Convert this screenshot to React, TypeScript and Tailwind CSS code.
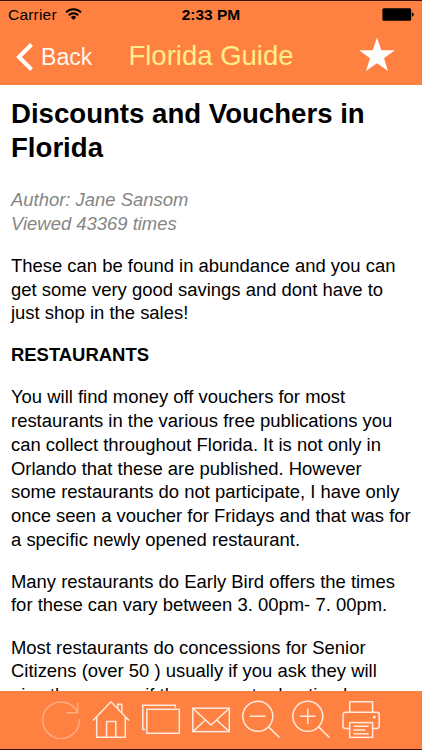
import type { ReactNode } from "react";

const paragraphs = [
  [
    "These can be found in abundance and you can",
    "get some very good savings and dont have to",
    "just shop in the sales!",
  ],
  ["RESTAURANTS"],
  [
    "You will find money off vouchers for most",
    "restaurants in the various free publications you",
    "can collect throughout Florida. It is not only in",
    "Orlando that these are published. However",
    "some restaurants do not participate, I have only",
    "once seen a voucher for Fridays and that was for",
    "a specific newly opened restaurant.",
  ],
  [
    "Many restaurants do Early Bird offers the times",
    "for these can vary between 3. 00pm- 7. 00pm.",
  ],
  [
    "Most restaurants do concessions for Senior",
    "Citizens (over 50 ) usually if you ask they will",
    "give these even if they are not advertised.",
  ],
];

function ToolIcon({ label, faded, children }: { label: string; faded?: boolean; children: ReactNode }) {
  return (
    <button aria-label={label} className={faded ? "opacity-40" : ""}>
      <svg
        className="block h-[40px] w-[40px]"
        viewBox="0 0 40 40"
        fill="none"
        stroke="#ffeadf"
        strokeWidth="1.5"
      >
        {children}
      </svg>
    </button>
  );
}

function StatusBar() {
  return (
    <div className="grid h-[28px] grid-cols-3 items-center text-[15.5px] text-black">
      <div className="flex items-center gap-[8px] pl-[8px]">
        <span className="tracking-[0.2px]">Carrier</span>
        <svg className="mb-[3px] h-[12px] w-[17px]" viewBox="0 0 17 12" fill="none" stroke="black" strokeWidth="2">
          <path d="M1 4.4a10.6 10.6 0 0 1 15 0" />
          <path d="M3.8 7.3a6.6 6.6 0 0 1 9.4 0" />
          <path d="M8.5 12 5.8 9.2a3.8 3.8 0 0 1 5.4 0Z" fill="black" stroke="none" />
        </svg>
      </div>
      <span className="text-center font-bold">2:33 PM</span>
      <div className="flex justify-end pr-[8px] pb-px">
        <svg className="h-[13px] w-[32px]" viewBox="0 0 32 13" fill="black">
          <rect x="0.4" y="0.3" width="28.8" height="12.4" rx="1.5" />
          <path d="M30 4.4c2.3.6 2.3 3.6 0 4.2Z" />
        </svg>
      </div>
    </div>
  );
}

function NavBar() {
  return (
    <div className="grid h-[56px] grid-cols-[110px_1fr_110px] items-center">
      <button className="flex items-center gap-[8px] pl-[16px] text-[#fff6f0]">
        <svg className="mb-px h-[28px] w-[17px]" viewBox="0 0 17 28" fill="none" stroke="white" strokeWidth="4">
          <path d="M15.5 1.5 3 14l12.5 12.5" />
        </svg>
        <span className="pt-px text-[23.1px] leading-none">Back</span>
      </button>
      <h1 className="pb-[3px] text-center text-[27.5px] leading-none whitespace-nowrap text-[#ffef88]">
        Florida Guide
      </h1>
      <button aria-label="Favourite" className="flex justify-end pr-[27px] pb-[5px]">
        <svg className="h-[35px] w-[36px]" viewBox="0 0 36 35" fill="white">
          <path d="M18 0.5 22.3 13.2H35.8L25 21.2 29 34 18 26.2 7 34 11 21.2.2 13.2h13.5Z" />
        </svg>
      </button>
    </div>
  );
}

function Toolbar() {
  return (
    <footer className="flex h-[59px] shrink-0 items-start gap-[10px] border-b border-[#3a0d00] bg-[#ff8142] pt-[8px] pl-[41px]">
      <ToolIcon label="Reload" faded>
        <path d="M36.7 13.7A18.3 18.3 0 1 0 38.3 20.3M36.7 3.7v10h-11" />
      </ToolIcon>
      <ToolIcon label="Home">
        <path d="M2 21.5 20 2.8l18 18.7M5.7 18v20.3h28.6V18M15.6 38V22.6h9.2V38M26.8 9.6V5.3h4v8.5" />
      </ToolIcon>
      <ToolIcon label="Pages">
        <path d="M4.3 30.6H1.8V6.3h32.5v2.5" />
        <rect x="5.8" y="10.3" width="32.5" height="24" />
      </ToolIcon>
      <ToolIcon label="Mail">
        <rect x="1.8" y="9.2" width="36.5" height="23.4" />
        <path d="m1.8 9.2 18.2 16.8L38.3 9.2M1.8 32.6l12.6-11.6M38.3 32.6 25.6 21" />
      </ToolIcon>
      <ToolIcon label="Zoom out">
        <circle cx="16.8" cy="17.3" r="15" />
        <path d="M9 17.3h15.5M27.6 27.9l10.8 10.6" />
      </ToolIcon>
      <ToolIcon label="Zoom in">
        <circle cx="16.8" cy="17.3" r="15" />
        <path d="M9 17.3h15.5M16.8 9.5v15.6M27.6 27.9l10.8 10.6" />
      </ToolIcon>
      <ToolIcon label="Print">
        <path d="M8.7 13.3V2.7h22.9v10.6M8.7 29.5H4.4A2.4 2.4 0 0 1 2 27.1V15.7a2.4 2.4 0 0 1 2.4-2.4h31.4a2.4 2.4 0 0 1 2.4 2.4v11.4a2.4 2.4 0 0 1-2.4 2.4h-4.2" />
        <rect x="8.7" y="23.6" width="22.9" height="14.8" />
        <path d="M12.5 27.3h15.2M12.5 31h11.7M12.5 34.7h15.2" />
        <circle cx="33.2" cy="18" r="0.8" fill="#ffeadf" />
      </ToolIcon>
    </footer>
  );
}

function App() {
  return (
    <div className="flex h-[750px] w-[422px] flex-col overflow-hidden bg-white font-['Liberation_Sans',Arial,sans-serif]">
      <header className="h-[85px] shrink-0 border-t border-[#3a0d00] bg-[#ff8142]">
        <StatusBar />
        <NavBar />
      </header>

      <main className="min-h-0 flex-1 overflow-hidden pt-[12px] pl-[11px] whitespace-nowrap text-black">
        <h2 className="text-[27.6px] leading-[34.3px] font-bold">
          Discounts and Vouchers in
          <br />
          Florida
        </h2>
        <p className="mt-[22.4px] text-[18.46px] leading-[23.73px] text-[#858585] italic">
          Author: Jane Sansom
          <br />
          Viewed 43369 times
        </p>
        {paragraphs.map((lines) => (
          <p
            key={lines[0]}
            className={`mt-[18.4px] text-[18.46px] leading-[23.7px] ${lines.length === 1 ? "font-bold" : ""}`}
          >
            {lines.map((line) => (
              <span key={line} className="block">
                {line}
              </span>
            ))}
          </p>
        ))}
      </main>

      <Toolbar />
    </div>
  );
}

export default App;
